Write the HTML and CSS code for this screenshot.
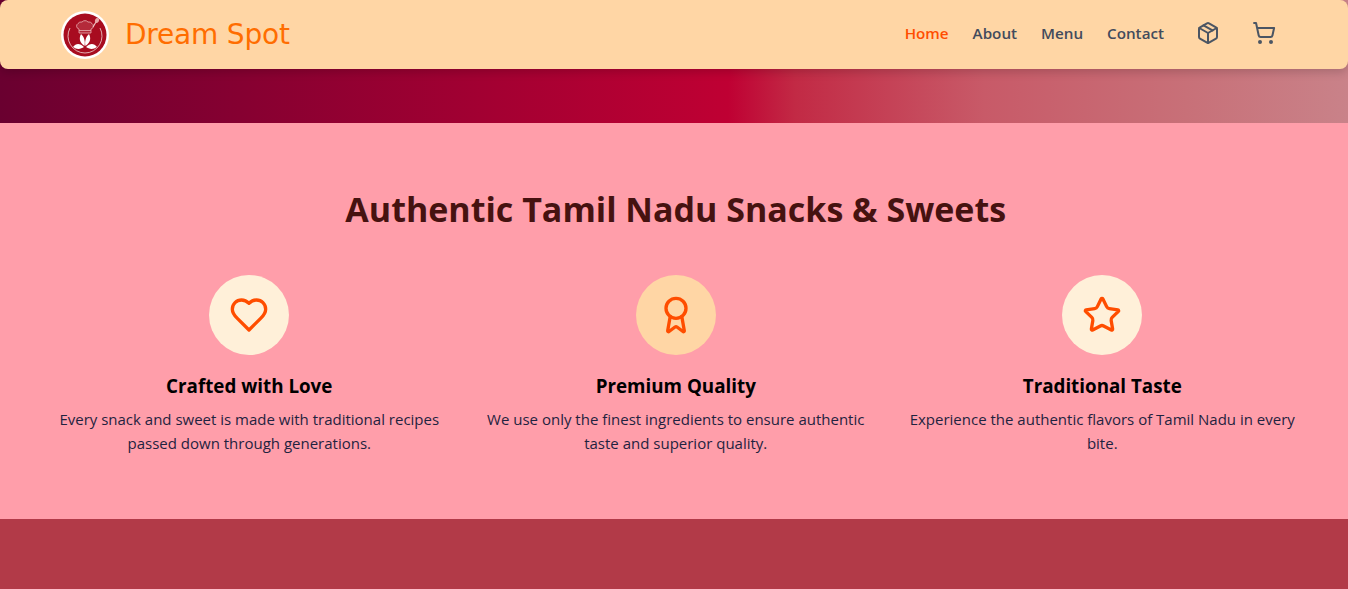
FILE: index.html
```html
<!DOCTYPE html>
<html lang="en">

<head>
    <meta charset="UTF-8">
    <meta name="viewport" content="width=device-width, initial-scale=1.0">
    <title>Dream Spot</title>
    <link rel="stylesheet" href="styles.css">
</head>

<body>
    <div class="hero">
        <header class="navbar">
            <a class="brand" href="#">
                <svg class="logo" viewBox="0 0 48 48" aria-hidden="true">
                    <circle cx="24" cy="24" r="24" fill="#fff" />
                    <circle cx="24" cy="24" r="21.500" fill="#a80c20" />
                    <path d="M9 17A17 17 0 1 0 39 17" fill="none" stroke="#f3d6d6" stroke-width="0.800" />
                    <path d="M18 22v-4a3 3 0 0 1-1-5.500 4 4 0 0 1 4-1.500 4 4 0 0 1 6 0 4 4 0 0 1 4 1.500 3 3 0 0 1-1 5.500v4z" fill="#b42a3a" stroke="#f0c4c4" stroke-width="0.700" />
                    <path d="M18 19.500h12" stroke="#f0c4c4" stroke-width="0.700" />
                    <path d="M32 16l3-5" stroke="#f0c4c4" stroke-width="1.200" />
                    <ellipse cx="36" cy="9.500" rx="2" ry="2.500" fill="#e8a8a8" transform="rotate(30 36 9.500)" />
                    <path d="M23.500 35C18 31 18 27 20 23c3.500 3 4.500 8 3.500 12zM24.500 35C30 31 30 27 28 23c-3.500 3-4.500 8-3.500 12z" fill="#fff" />
                    <path d="M23 36c-4-4-8-4-11 0 4 3 8 2 11 0zM25 36c4-4 8-4 11 0-4 3-8 2-11 0z" fill="#fff" />
                </svg>
                <span class="brand-name">Dream Spot</span>
            </a>
            <nav class="nav-links">
                <a class="active" href="#">Home</a>
                <a href="#">About</a>
                <a href="#">Menu</a>
                <a href="#">Contact</a>
            </nav>
            <div class="nav-icons">
                <svg class="icon" viewBox="0 0 24 24" aria-hidden="true">
                    <path d="M11 21.730a2 2 0 0 0 2 0l7-4A2 2 0 0 0 21 16V8a2 2 0 0 0-1-1.730l-7-4a2 2 0 0 0-2 0l-7 4A2 2 0 0 0 3 8v8a2 2 0 0 0 1 1.730z" />
                    <path d="M12 22V12" />
                    <path d="M3.290 7 12 12l8.710-5" />
                    <path d="m7.500 4.270 9 5.150" />
                </svg>
                <svg class="icon" viewBox="0 0 24 24" aria-hidden="true">
                    <circle cx="8" cy="21" r="1" />
                    <circle cx="19" cy="21" r="1" />
                    <path d="M2.050 2.050h2l2.660 12.420a2 2 0 0 0 2 1.580h9.780a2 2 0 0 0 1.950-1.570l1.650-7.430H5.120" />
                </svg>
            </div>
        </header>
    </div>

    <section class="features">
        <h1>Authentic Tamil Nadu Snacks &amp; Sweets</h1>
        <div class="feature-grid">
            <div class="feature">
                <div class="feature-circle">
                    <svg class="feature-icon" viewBox="0 0 24 24" aria-hidden="true">
                        <path d="M19 14c1.490-1.460 3-3.210 3-5.500A5.500 5.500 0 0 0 16.500 3c-1.760 0-3 .5-4.500 2-1.500-1.500-2.740-2-4.500-2A5.500 5.500 0 0 0 2 8.500c0 2.300 1.500 4.050 3 5.500l7 7z" />
                    </svg>
                </div>
                <h3>Crafted with Love</h3>
                <p>Every snack and sweet is made with traditional recipes passed down through generations.</p>
            </div>
            <div class="feature">
                <div class="feature-circle peach">
                    <svg class="feature-icon" viewBox="0 0 24 24" aria-hidden="true">
                        <path d="m15.477 12.890 1.515 8.526a.500.500 0 0 1-.810.470l-3.580-2.687a1 1 0 0 0-1.197 0l-3.586 2.686a.500.500 0 0 1-.810-.469l1.514-8.526" />
                        <circle cx="12" cy="8" r="6" />
                    </svg>
                </div>
                <h3>Premium Quality</h3>
                <p>We use only the finest ingredients to ensure authentic taste and superior quality.</p>
            </div>
            <div class="feature">
                <div class="feature-circle">
                    <svg class="feature-icon" viewBox="0 0 24 24" aria-hidden="true">
                        <path d="M11.525 2.295a.530.530 0 0 1 .950 0l2.310 4.679a2.120 2.120 0 0 0 1.595 1.160l5.166.756a.530.530 0 0 1 .294.904l-3.736 3.638a2.120 2.120 0 0 0-.611 1.878l.882 5.140a.530.530 0 0 1-.771.560l-4.618-2.428a2.120 2.120 0 0 0-1.973 0L6.396 21.010a.530.530 0 0 1-.770-.560l.881-5.139a2.120 2.120 0 0 0-.611-1.879L2.160 9.795a.530.530 0 0 1 .294-.906l5.165-.755a2.120 2.120 0 0 0 1.597-1.160z" />
                    </svg>
                </div>
                <h3>Traditional Taste</h3>
                <p>Experience the authentic flavors of Tamil Nadu in every bite.</p>
            </div>
        </div>
    </section>

    <section class="bottom-band"></section>
</body>

</html>
```

FILE: styles.css
```css
* {
    box-sizing: border-box;
}

body {
    margin: 0;
    font-family: "Open Sans", "Noto Sans", Arial, sans-serif;
    background-color: #b23a48;
}

a {
    text-decoration: none;
}

.hero {
    height: 123px;
    background-image: linear-gradient(to right, #6a0030 0%, #bf0033 54%, #c22a45 59%, #c85a68 73%, #c87078 88%, #c98289 100%);
}

.navbar {
    display: flex;
    align-items: center;
    height: 69px;
    padding: 0 72px 0 61px;
    background-color: #ffd6a5;
    border-radius: 8px;
    box-shadow: 0 4px 8px rgba(0, 0, 0, 0.15);
}

.brand {
    display: flex;
    align-items: center;
    gap: 16px;
    margin-right: auto;
}

.logo {
    width: 48px;
    height: 48px;
}

.brand-name {
    font-family: "DejaVu Sans", sans-serif;
    font-size: 28px;
    letter-spacing: -0.2px;
    color: #ff6d00;
}

.nav-links {
    display: flex;
    gap: 24px;
    margin-bottom: 3px;
    font-size: 15.200px;
    font-weight: 600;
}

.nav-links a {
    color: #424b5c;
}

.nav-links a.active {
    color: #ff4d00;
}

.nav-icons {
    display: flex;
    gap: 32px;
    margin-left: 32px;
    margin-bottom: 3px;
}

.icon {
    width: 24px;
    height: 24px;
    fill: none;
    stroke: #4b5563;
    stroke-width: 2;
    stroke-linecap: round;
    stroke-linejoin: round;
}

.features {
    height: 396px;
    padding: 64px 48.500px 0 52px;
    background-color: #ff9eaa;
}

.features h1 {
    margin: 0 0 44px;
    font-size: 34px;
    line-height: 44px;
    font-weight: 700;
    text-align: center;
    color: #461210;
}

.feature-grid {
    display: grid;
    grid-template-columns: repeat(3, 1fr);
    gap: 32px;
}

.feature {
    text-align: center;
}

.feature-circle {
    display: flex;
    align-items: center;
    justify-content: center;
    width: 80px;
    height: 80px;
    margin: 0 auto 17px;
    border-radius: 50%;
    background-color: #fff0d9;
}

.feature-circle.peach {
    background-color: #ffd6a5;
}

.feature-icon {
    width: 40px;
    height: 40px;
    fill: none;
    stroke: #ff4d00;
    stroke-width: 2;
    stroke-linecap: round;
    stroke-linejoin: round;
}

.feature h3 {
    margin: 0 0 7px;
    font-size: 18.800px;
    line-height: 28px;
    font-weight: 700;
    color: #000;
}

.feature p {
    margin: 0;
    font-size: 15px;
    line-height: 24px;
    color: #1f2340;
}

.bottom-band {
    height: 70px;
    background-color: #b23a48;
}
```
